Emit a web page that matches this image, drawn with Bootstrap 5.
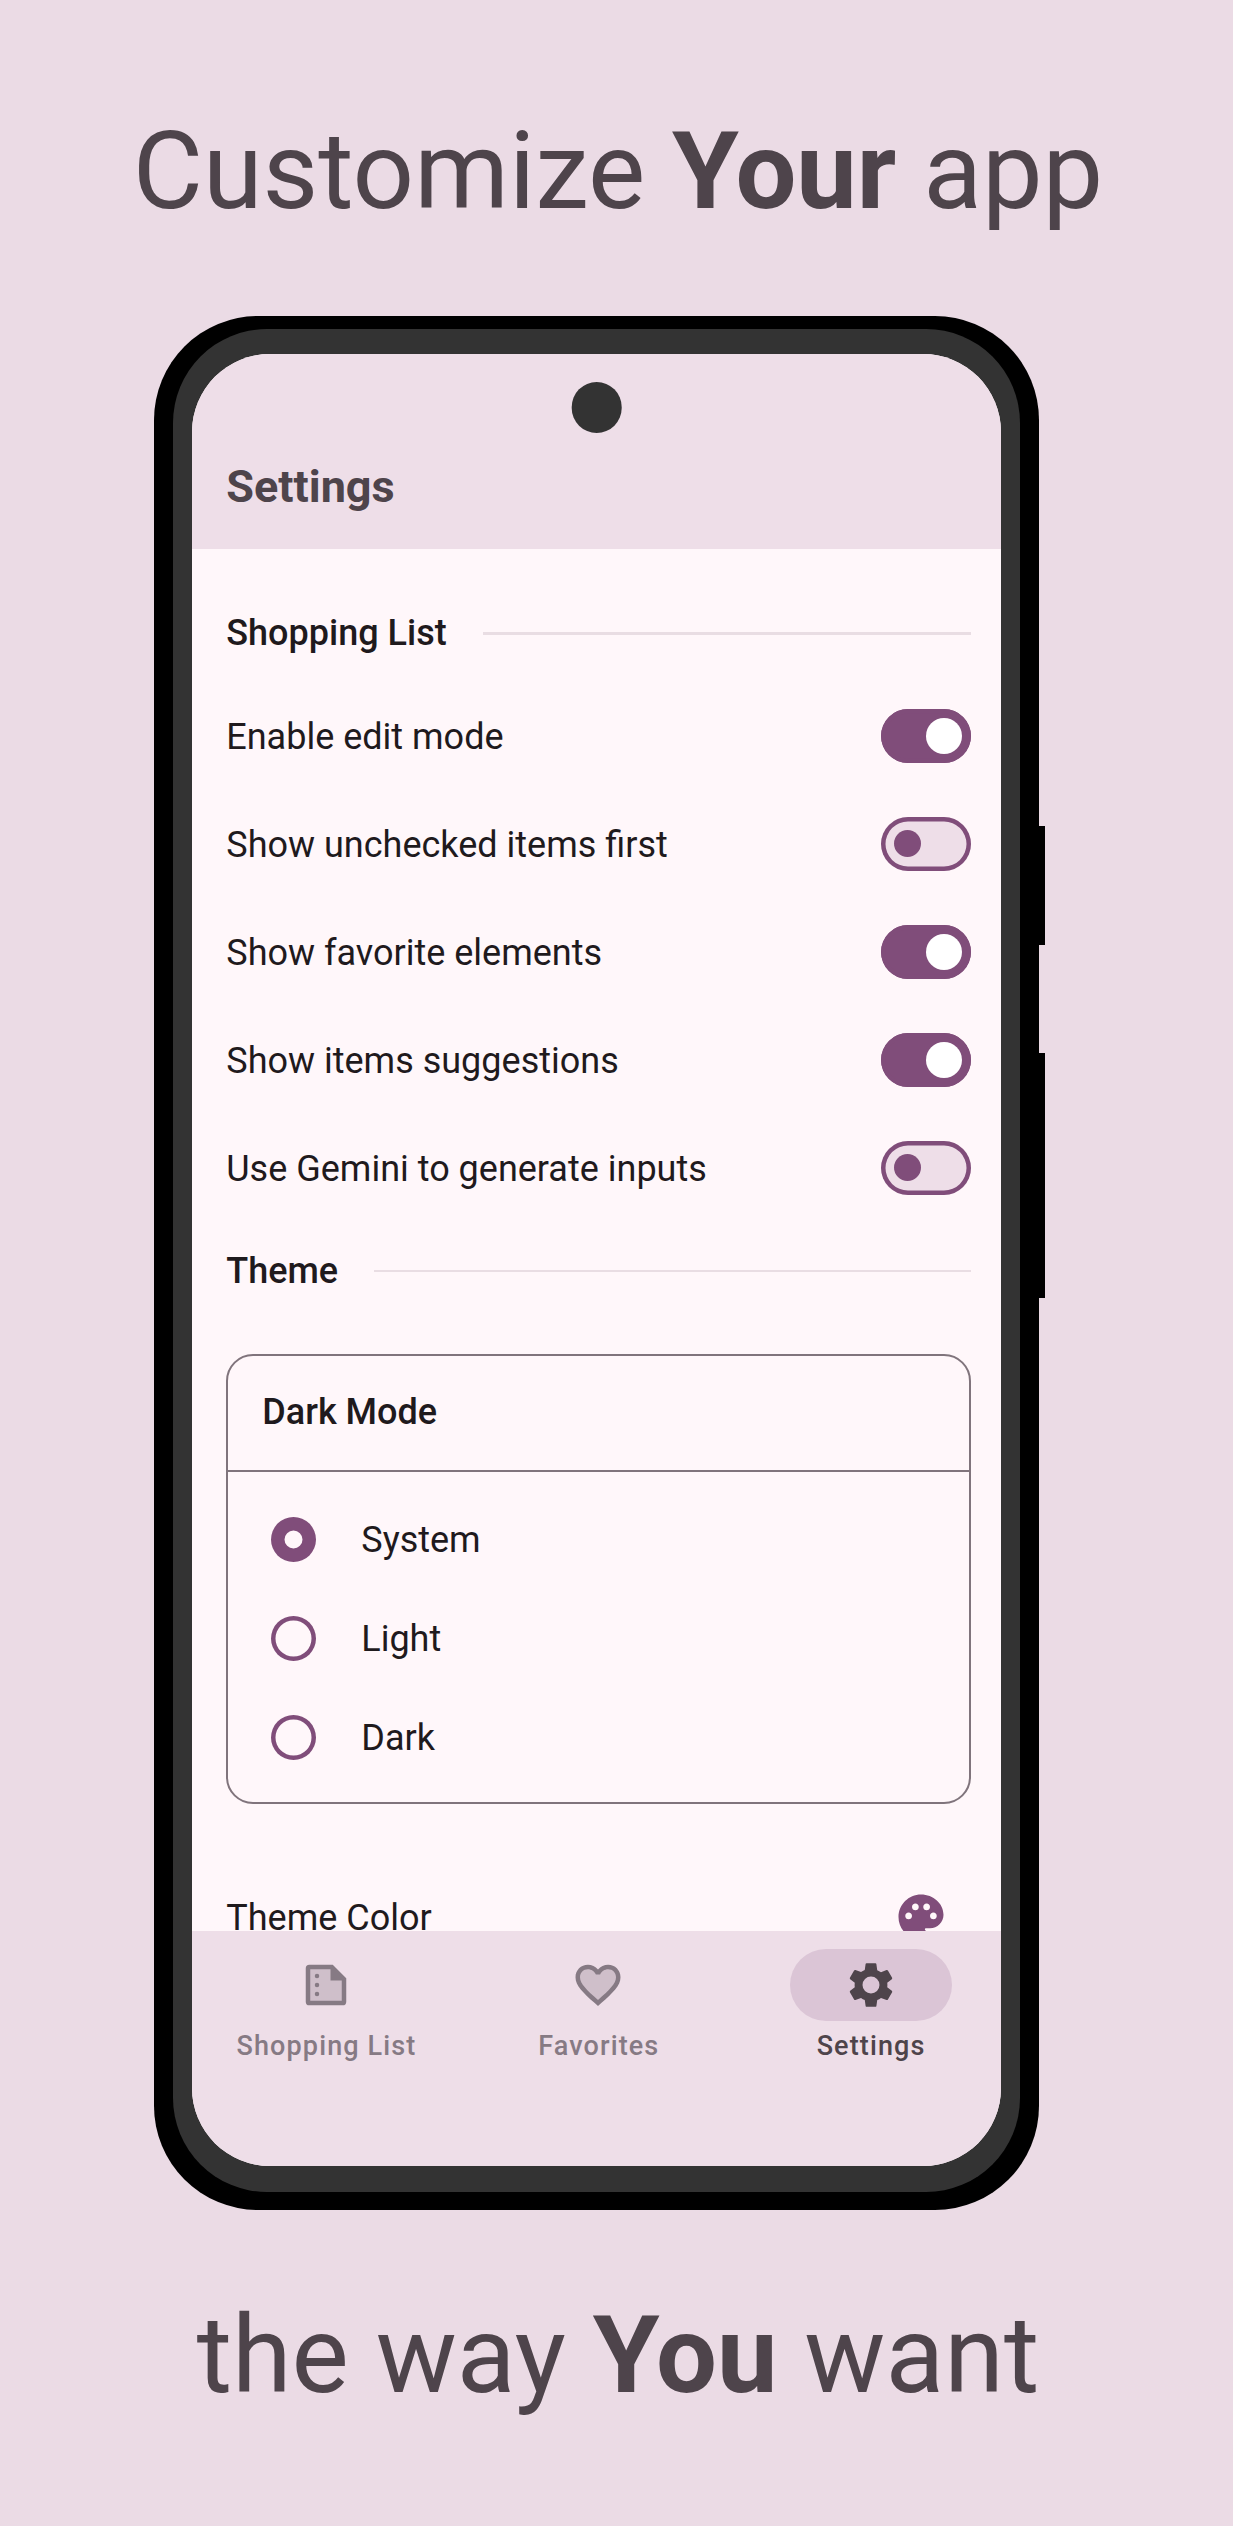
<!DOCTYPE html>
<html lang="en">
<head>
<meta charset="utf-8">
<meta name="viewport" content="width=device-width, initial-scale=1">
<title>Customize Your app</title>
<link href="https://cdn.jsdelivr.net/npm/bootstrap@5.3.0/dist/css/bootstrap.min.css" rel="stylesheet">
<style>
  :root {
    --brand: #804d7a;
    --ink: #1f1a1d;
    --ink-soft: #4e444b;
    --bar: #eedee8;
    --surface: #fff7fa;
    --outline: #80747c;
  }
  body { width: 1233px; height: 2526px; background: #ebdbe5; font-family: Roboto, sans-serif; color: var(--ink); overflow: hidden; }
  .headline { font-size: 108px; line-height: 128px; color: var(--ink-soft); font-weight: 400; }
  .headline b { font-weight: 700; }
  .headline-top { padding-top: 106.5px; height: 316.3px; padding-left: 3px; }
  .headline-bottom { padding-top: 81px; padding-left: 3px; }

  .phone { width: 884.5px; height: 1893.7px; margin-left: 154.2px; padding: 12.4px 18.4px 18px 19.1px; border-radius: 104px; background: #000; }
  .phone-bezel { padding: 25.6px 19px 26px 18.7px; border-radius: 94px; background: #333; }
  .phone-screen { border-radius: 78px; background: var(--surface); }
  .side-key { left: 100%; width: 6.4px; margin-left: -.5px; background: #000; }
  .key-short { top: 509.5px; height: 119.7px; }
  .key-long { top: 736.3px; height: 245.7px; }
  .camera { width: 50.6px; height: 50.6px; background: #333; top: 27.8px; left: 50%; transform: translateX(-50%); }

  .app-bar { height: 194.4px; padding: 105px 34.3px 0; background: var(--bar); }
  .app-bar h1 { font-size: 45px; line-height: 56px; font-weight: 700; color: var(--ink-soft); }

  .settings-body { min-height: 0; padding: 54.8px 30.3px 0 34.3px; font-size: 36px; line-height: 54px; }
  .section-title { font-size: 36px; line-height: 60px; font-weight: 500; }
  .section-head { gap: 36px; }
  .section-rule { height: 2.25px; background: #e9dde3; }
  .switch-list { padding-top: 18.5px; }
  .switch-row { height: 108px; }
  .switch-row > span:first-child, .mode-row > span:last-child, .color-row > span { padding-top: 2px; }
  .toggle { width: 90px; height: 54px; box-shadow: inset 0 0 0 4.5px var(--brand); border-radius: 27px; background: var(--bar); padding: 0 13.3px; }
  .toggle i { width: 27px; height: 27px; border-radius: 50%; background: var(--brand); }
  .toggle.on { background: var(--brand); padding: 0 9px; justify-content: flex-end; }
  .toggle.on i { width: 36px; height: 36px; background: #fff; }
  .theme-head { padding-top: 19px; }

  .mode-card { border: 2.25px solid var(--outline); border-radius: 27px; background: transparent; margin-top: 53.5px; height: 450px; }
  .mode-title { height: 115.5px; padding: 0 0 2px 34px; border-bottom: 2.25px solid var(--outline); }
  .mode-list { padding: 18px 0 0 42.6px; }
  .mode-row { height: 99px; gap: 45.4px; }
  .dot { width: 45px; height: 45px; border-radius: 50%; box-shadow: inset 0 0 0 4.5px var(--brand); }
  .dot.on { box-shadow: inset 0 0 0 13.5px var(--brand); }
  .color-row { height: 108px; margin-top: 58.5px; padding-right: 23px; }
  .ico { width: 54px; height: 54px; display: block; }

  .tab-bar { height: 235.2px; background: var(--bar); padding-top: 18px; }
  .tab-set { width: 817px; margin-left: -2.2px; }
  .tab-pill { width: 162px; height: 72px; border-radius: 36px; }
  .tab-cell { color: #867a84; font-size: 27px; font-weight: 500; letter-spacing: 1.125px; line-height: 36px; }
  .tab-cell.current { color: var(--ink-soft); }
  .tab-cell.current .tab-pill { background: #dbc5d6; }
  .tab-text { margin-top: 7px; padding-left: 1px; }
</style>
</head>
<body>
<div class="headline headline-top text-center text-nowrap">Customize <b>Your</b> app</div>

<div class="phone position-relative">
  <span class="side-key key-short position-absolute"></span>
  <span class="side-key key-long position-absolute"></span>
  <div class="phone-bezel h-100">
    <div class="phone-screen position-relative overflow-hidden h-100 d-flex flex-column">
      <span class="camera position-absolute rounded-circle"></span>
      <header class="app-bar flex-shrink-0"><h1 class="m-0">Settings</h1></header>

      <main class="settings-body flex-grow-1 overflow-hidden">
        <div class="section-head d-flex align-items-center">
          <h2 class="section-title m-0">Shopping List</h2><div class="section-rule flex-grow-1"></div>
        </div>
        <div class="switch-list">
          <div class="switch-row d-flex align-items-center justify-content-between"><span>Enable edit mode</span><span class="toggle on d-flex align-items-center"><i></i></span></div>
          <div class="switch-row d-flex align-items-center justify-content-between"><span>Show unchecked items first</span><span class="toggle d-flex align-items-center"><i></i></span></div>
          <div class="switch-row d-flex align-items-center justify-content-between"><span>Show favorite elements</span><span class="toggle on d-flex align-items-center"><i></i></span></div>
          <div class="switch-row d-flex align-items-center justify-content-between"><span>Show items suggestions</span><span class="toggle on d-flex align-items-center"><i></i></span></div>
          <div class="switch-row d-flex align-items-center justify-content-between"><span>Use Gemini to generate inputs</span><span class="toggle d-flex align-items-center"><i></i></span></div>
        </div>
        <div class="section-head theme-head d-flex align-items-center">
          <h2 class="section-title m-0">Theme</h2><div class="section-rule flex-grow-1"></div>
        </div>

        <div class="mode-card card">
          <div class="mode-title d-flex align-items-center"><h3 class="section-title m-0">Dark Mode</h3></div>
          <div class="mode-list">
            <div class="mode-row d-flex align-items-center"><span class="dot on"></span><span>System</span></div>
            <div class="mode-row d-flex align-items-center"><span class="dot"></span><span>Light</span></div>
            <div class="mode-row d-flex align-items-center"><span class="dot"></span><span>Dark</span></div>
          </div>
        </div>

        <div class="color-row d-flex align-items-center justify-content-between">
          <span>Theme Color</span>
          <svg class="ico" viewBox="0 0 24 24" fill="#804d7a"><path d="M12 2C6.49 2 2 6.49 2 12s4.49 10 10 10c1.38 0 2.5-1.12 2.5-2.5 0-.61-.23-1.2-.64-1.67-.08-.1-.13-.21-.13-.33 0-.28.22-.5.5-.5H16c3.31 0 6-2.69 6-6 0-4.96-4.49-9-10-9zm5.5 11c-.83 0-1.5-.67-1.5-1.5s.67-1.5 1.5-1.5 1.5.67 1.5 1.5-.67 1.5-1.5 1.5zm-3-4c-.83 0-1.5-.67-1.5-1.5S13.67 6 14.5 6s1.5.67 1.5 1.5S15.33 9 14.5 9zM5 11.5c0-.83.67-1.5 1.5-1.5s1.5.67 1.5 1.5S7.33 13 6.5 13 5 12.33 5 11.5zm6-4c0 .83-.67 1.5-1.5 1.5S8 8.33 8 7.5 8.67 6 9.5 6s1.5.67 1.5 1.5z"/></svg>
        </div>
      </main>

      <nav class="tab-bar flex-shrink-0">
        <div class="tab-set d-flex">
          <div class="tab-cell d-flex flex-column align-items-center flex-fill w-100">
            <span class="tab-pill d-flex align-items-center justify-content-center">
              <svg class="ico" viewBox="0 0 24 24"><path fill="#867a84" d="M4.6 3H15l6 6v10.4a1.6 1.6 0 0 1-1.6 1.6H4.6A1.6 1.6 0 0 1 3 19.400V4.600A1.6 1.6 0 0 1 4.600 3z"/><path fill="#cfbfca" d="M5 5h9v5h5v9H5z"/><g fill="#867a84"><circle cx="8" cy="8" r="1"/><circle cx="8" cy="12" r="1"/><circle cx="8" cy="16" r="1"/></g></svg>
            </span>
            <span class="tab-text">Shopping List</span>
          </div>
          <div class="tab-cell d-flex flex-column align-items-center flex-fill w-100">
            <span class="tab-pill d-flex align-items-center justify-content-center">
              <svg class="ico" viewBox="0 0 24 24"><path fill="#cfbfca" d="M16.500 4c-1.740 0-3.410.81-4.500 2.090C10.910 4.810 9.240 4 7.500 4 5 4 3 6 3 8.500c0 3.400 3.400 6.400 9 11.500 5.600-5.100 9-8.100 9-11.500C21 6 19 4 16.500 4z"/><path fill="#867a84" d="M16.5 3c-1.740 0-3.410.81-4.500 2.090C10.910 3.810 9.240 3 7.500 3 4.420 3 2 5.420 2 8.500c0 3.780 3.400 6.860 8.550 11.540L12 21.350l1.450-1.320C18.600 15.360 22 12.280 22 8.500 22 5.420 19.580 3 16.500 3zm-4.400 15.550l-.1.1-.1-.1C7.140 14.240 4 11.390 4 8.500 4 6.500 5.500 5 7.500 5c1.540 0 3.040.99 3.570 2.360h1.870C13.460 5.990 14.960 5 16.500 5c2 0 3.500 1.500 3.500 3.500 0 2.890-3.140 5.740-7.900 10.050z"/></svg>
            </span>
            <span class="tab-text">Favorites</span>
          </div>
          <div class="tab-cell current d-flex flex-column align-items-center flex-fill w-100">
            <span class="tab-pill d-flex align-items-center justify-content-center">
              <svg class="ico" viewBox="0 0 24 24"><g transform="translate(12 12) scale(.97) translate(-12 -12)"><path fill="#4e444b" fill-rule="evenodd" d="M19.440 12.990c.04-.33.07-.65.07-.99 0-.34-.03-.66-.07-.99l2.100-1.650c.2-.15.25-.42.13-.64l-1.920-3.320c-.13-.23-.4-.32-.63-.23l-2.550 1.030c-.52-.4-1.090-.74-1.710-1l-.4-2.800c-.03-.24-.2-.4-.42-.4h-4.080c-.22 0-.4.16-.43.4l-.4 2.670c-.62.26-1.190.6-1.710 1L4.880 5.170c-.23-.09-.5 0-.63.23L2.330 8.720c-.12.22-.07.49.13.64l2.110 1.650c-.04.33-.07.65-.07.99s.03.66.07.99l-2.110 1.650c-.2.15-.25.42-.13.64l1.920 3.320c.13.23.4.32.63.23l2.550-.9c.52.4 1.090.74 1.710 1l.4 2.670c.03.24.21.4.43.4h4.080c.22 0 .39-.16.42-.4l.4-2.670c.62-.26 1.190-.6 1.710-1l2.550.9c.23.09.5 0 .63-.23l1.920-3.320c.12-.22.07-.49-.13-.64zM12 8.110a3.890 3.890 0 1 0 0 7.780 3.890 3.890 0 0 0 0-7.780z"/></g></svg>
            </span>
            <span class="tab-text">Settings</span>
          </div>
        </div>
      </nav>
    </div>
  </div>
</div>

<div class="headline headline-bottom text-center text-nowrap">the way <b>You</b> want</div>
<script src="https://cdn.jsdelivr.net/npm/bootstrap@5.3.0/dist/js/bootstrap.bundle.min.js"></script>
</body>
</html>
